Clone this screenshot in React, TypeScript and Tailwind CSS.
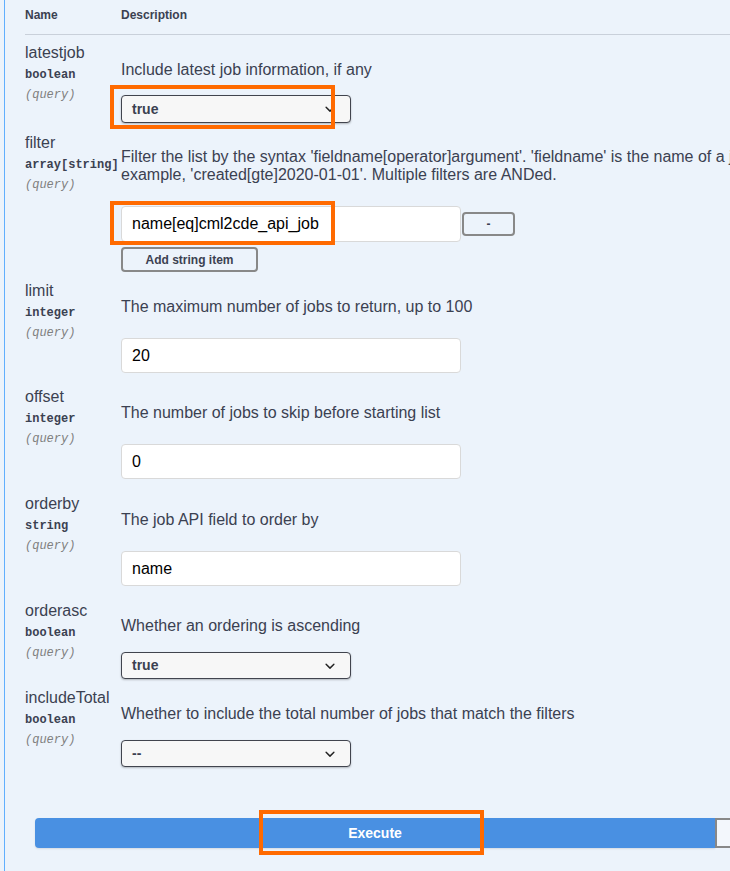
import React from "react";

type Row = {
  name: string;
  type: string;
  desc: string[];
  kind: "select" | "input" | "array";
  value: string;
  namePt: string;
  descPt: string;
  ctrl: string;
  mb: string;
};

const rows: Row[] = [
  {
    name: "latestjob",
    type: "boolean",
    desc: ["Include latest job information, if any"],
    kind: "select",
    value: "true",
    namePt: "pt-[9px]",
    descPt: "pt-[26px]",
    ctrl: "mt-[16px] h-[28px]",
    mb: "pb-[1px]",
  },
  {
    name: "filter",
    type: "array[string]",
    desc: [
      "Filter the list by the syntax 'fieldname[operator]argument'. 'fieldname' is the name of a job field. For",
      "example, 'created[gte]2020-01-01'. Multiple filters are ANDed.",
    ],
    kind: "array",
    value: "name[eq]cml2cde_api_job",
    namePt: "pt-[10px]",
    descPt: "pt-[24px]",
    ctrl: "mt-[22px] h-[36px]",
    mb: "pb-0",
  },
  {
    name: "limit",
    type: "integer",
    desc: ["The maximum number of jobs to return, up to 100"],
    kind: "input",
    value: "20",
    namePt: "pt-[10px]",
    descPt: "pt-[26px]",
    ctrl: "mt-[22px] h-[35px]",
    mb: "pb-[6px]",
  },
  {
    name: "offset",
    type: "integer",
    desc: ["The number of jobs to skip before starting list"],
    kind: "input",
    value: "0",
    namePt: "pt-[9px]",
    descPt: "pt-[25px]",
    ctrl: "mt-[22px] h-[35px]",
    mb: "pb-[6px]",
  },
  {
    name: "orderby",
    type: "string",
    desc: ["The job API field to order by"],
    kind: "input",
    value: "name",
    namePt: "pt-[10px]",
    descPt: "pt-[26px]",
    ctrl: "mt-[22px] h-[35px]",
    mb: "pb-[6px]",
  },
  {
    name: "orderasc",
    type: "boolean",
    desc: ["Whether an ordering is ascending"],
    kind: "select",
    value: "true",
    namePt: "pt-[10px]",
    descPt: "pt-[25px]",
    ctrl: "mt-[17px] h-[27px]",
    mb: "pb-[1px]",
  },
  {
    name: "includeTotal",
    type: "boolean",
    desc: ["Whether to include the total number of jobs that match the filters"],
    kind: "select",
    value: "--",
    namePt: "pt-[9px]",
    descPt: "pt-[25px]",
    ctrl: "mt-[17px] h-[27px]",
    mb: "pb-0",
  },
];

const Chevron = () => (
  <svg width="20" height="20" viewBox="0 0 20 20" className="shrink-0">
    <path
      d="M13.418 7.859a.695.695 0 01.978 0 .68.68 0 010 .969l-3.908 3.83a.697.697 0 01-.979 0l-3.908-3.83a.68.68 0 010-.969.695.695 0 01.978 0L10 11l3.418-3.141z"
      fill="#222"
    />
  </svg>
);

function Control({ row }: { row: Row }) {
  if (row.kind === "select") {
    return (
      <div
        className={`${row.ctrl} w-[230px] flex items-center justify-between pl-[10px] pr-[10px] rounded-[4px] border border-[#41444e] bg-[#f7f7f7] shadow-[0_1px_2px_rgba(0,0,0,0.25)] text-[14px] font-bold text-[#3b4151]`}
      >
        <span>{row.value}</span>
        <Chevron />
      </div>
    );
  }
  if (row.kind === "input") {
    return (
      <div
        className={`${row.ctrl} w-[340px] flex items-center pl-[10px] rounded-[4px] border border-[#d9d9d9] bg-white text-[16px] text-black`}
      >
        {row.value}
      </div>
    );
  }
  return (
    <div className="flex flex-col">
      <div className="flex items-center mt-[22px]">
        <div className="h-[36px] w-[340px] flex items-center pl-[10px] rounded-[4px] border border-[#d9d9d9] bg-white text-[16px] text-black">
          {row.value}
        </div>
        <div className="ml-[1px] w-[53px] h-[24px] flex items-center justify-center rounded-[4px] border-2 border-[#888888] text-[12px] font-bold text-[#3b4151]">
          -
        </div>
      </div>
      <div className="mt-[5px] w-[137px] h-[25px] flex items-center justify-center rounded-[4px] border-2 border-[#888888] text-[12px] font-bold text-[#3b4151]">
        Add string item
      </div>
    </div>
  );
}

export default function App() {
  return (
    <div className="relative w-full h-[871px] overflow-hidden bg-[#ecf3fb] font-['Liberation_Sans',Arial,sans-serif] text-[#3b4151]">
      <div className="ml-[4px] h-full border-l border-[#61affe]">
        <div className="pl-[20px]">
          <div className="h-[35px] border-b border-[#c9d0da] flex items-start pt-[8px] text-[12px] font-bold leading-[14px] text-[#3b4151]">
            <div className="w-[96px] shrink-0">Name</div>
            <div>Description</div>
          </div>
          {rows.map((row) => (
            <div key={row.name} className={`flex ${row.mb}`}>
              <div className={`w-[96px] shrink-0 ${row.namePt} whitespace-nowrap`}>
                <div className="text-[16px] leading-[18px] text-[#3b4151]">{row.name}</div>
                <div className="mt-[5px] text-[12px] leading-[16px] font-bold font-['Liberation_Mono',monospace] text-[#3b4151]">
                  {row.type}
                </div>
                <div className="mt-[4px] text-[12px] leading-[16px] italic font-['Liberation_Mono',monospace] text-[#808080]">
                  (query)
                </div>
              </div>
              <div className={`${row.descPt} flex flex-col min-w-0`}>
                <div className="text-[16px] leading-[18px] text-[#3b4151] whitespace-nowrap">
                  {row.desc.map((d) => (
                    <div key={d}>{d}</div>
                  ))}
                </div>
                <Control row={row} />
              </div>
            </div>
          ))}
        </div>
        <div className="flex pl-[30px] mt-[51px]">
          <div className="w-[680px] h-[30px] shrink-0 flex items-center justify-center rounded-l-[4px] bg-[#4990e2] shadow-[0_1px_2px_rgba(0,0,0,0.1)] text-[14px] font-bold text-white">
            Execute
          </div>
          <div className="w-[680px] h-[30px] shrink-0 rounded-r-[4px] border-2 border-[#888888] bg-[#f3f7fc]"></div>
        </div>
      </div>

      <div className="absolute left-[110px] top-[85px] w-[225px] h-[44px] border-4 border-[#ff6a00] pointer-events-none" />
      <div className="absolute left-[110px] top-[201px] w-[225px] h-[44px] border-4 border-[#ff6a00] pointer-events-none" />
      <div className="absolute left-[259px] top-[810px] w-[225px] h-[45px] border-4 border-[#ff6a00] pointer-events-none" />
    </div>
  );
}
